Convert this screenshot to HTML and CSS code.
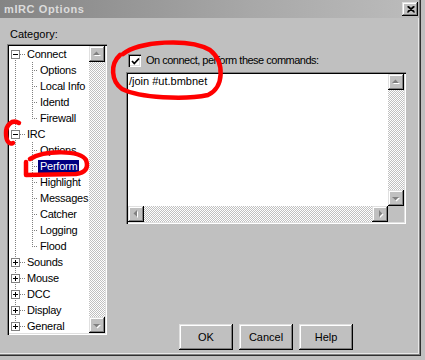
FILE: index.html
```html
<!DOCTYPE html>
<html>
<head>
<meta charset="utf-8">
<link rel="stylesheet" href="styles.css">
</head>
<body>
<div class="window">
  <div class="titlebar">
    <span class="title">mIRC Options</span>
    <span class="close raised"><svg width="8" height="7" viewBox="0 0 8 7"><path d="M0.5 0.5 L7.5 6.5 M1.5 0.5 L7.5 5.7 M7.5 0.5 L0.5 6.5 M6.5 0.5 L0.5 5.7" stroke="#000" stroke-width="1.1" fill="none"/></svg></span>
  </div>
  <div class="content">
    <div class="left">
      <div class="cat-label">Category:</div>
      <div class="tree sunken">
        <ul class="rows">
          <li class="row top first"><span class="c0"><span class="exp minus"></span></span><span class="label">Connect</span></li>
          <li class="row child"><span class="c0"></span><span class="c1"></span><span class="label">Options</span></li>
          <li class="row child"><span class="c0"></span><span class="c1"></span><span class="label">Local Info</span></li>
          <li class="row child"><span class="c0"></span><span class="c1"></span><span class="label">Identd</span></li>
          <li class="row child"><span class="c0"></span><span class="c1 endc"></span><span class="label">Firewall</span></li>
          <li class="row top"><span class="c0"><span class="exp minus"></span></span><span class="label">IRC</span></li>
          <li class="row child"><span class="c0"></span><span class="c1"></span><span class="label">Options</span></li>
          <li class="row child"><span class="c0"></span><span class="c1"></span><span class="label selected">Perform</span></li>
          <li class="row child"><span class="c0"></span><span class="c1"></span><span class="label">Highlight</span></li>
          <li class="row child"><span class="c0"></span><span class="c1"></span><span class="label">Messages</span></li>
          <li class="row child"><span class="c0"></span><span class="c1"></span><span class="label">Catcher</span></li>
          <li class="row child"><span class="c0"></span><span class="c1"></span><span class="label">Logging</span></li>
          <li class="row child"><span class="c0"></span><span class="c1 endc"></span><span class="label">Flood</span></li>
          <li class="row top"><span class="c0"><span class="exp plus"></span></span><span class="label">Sounds</span></li>
          <li class="row top"><span class="c0"><span class="exp plus"></span></span><span class="label">Mouse</span></li>
          <li class="row top"><span class="c0"><span class="exp plus"></span></span><span class="label">DCC</span></li>
          <li class="row top"><span class="c0"><span class="exp plus"></span></span><span class="label">Display</span></li>
          <li class="row top last"><span class="c0"><span class="exp plus"></span></span><span class="label">General</span></li>
        </ul>
        <div class="vscroll">
          <span class="sbtn raised"><svg width="16" height="16" viewBox="0 0 16 16"><polygon points="5,10 12,10 8.5,6.5" fill="#fff"/><polygon points="4,9 11,9 7.5,5.5" fill="#808080"/></svg></span>
          <span class="track"></span>
          <span class="sbtn raised"><svg width="16" height="16" viewBox="0 0 16 16"><polygon points="5,8 12,8 8.5,11.5" fill="#fff"/><polygon points="4,7 11,7 7.5,10.5" fill="#808080"/></svg></span>
        </div>
      </div>
    </div>
    <div class="right">
      <div class="check-row">
        <span class="checkbox"><svg width="9" height="9" viewBox="0 0 9 9"><path d="M1 4 L3.3 6.5 L8 1.5" stroke="#000" stroke-width="1.8" fill="none"/></svg></span>
        <span class="check-text">On connect, perform these commands:</span>
      </div>
      <div class="editor sunken">
        <div class="text">/join #ut.bmbnet</div>
        <div class="vscroll">
          <span class="sbtn raised"><svg width="16" height="16" viewBox="0 0 16 16"><polygon points="5,10 12,10 8.5,6.5" fill="#fff"/><polygon points="4,9 11,9 7.5,5.5" fill="#808080"/></svg></span>
          <span class="track"></span>
          <span class="sbtn raised"><svg width="16" height="16" viewBox="0 0 16 16"><polygon points="5,8 12,8 8.5,11.5" fill="#fff"/><polygon points="4,7 11,7 7.5,10.5" fill="#808080"/></svg></span>
        </div>
        <div class="hscroll">
          <span class="sbtn raised"><svg width="16" height="16" viewBox="0 0 16 16"><polygon points="10,5 10,12 6.5,8.5" fill="#fff"/><polygon points="9,4 9,11 5.5,7.5" fill="#808080"/></svg></span>
          <span class="track"></span>
          <span class="sbtn raised"><svg width="16" height="16" viewBox="0 0 16 16"><polygon points="8,5 8,12 11.5,8.5" fill="#fff"/><polygon points="7,4 7,11 10.5,7.5" fill="#808080"/></svg></span>
        </div>
        <div class="corner"></div>
      </div>
      <div class="buttons">
        <button class="btn raised">OK</button>
        <button class="btn raised">Cancel</button>
        <button class="btn raised">Help</button>
      </div>
    </div>
  </div>
  <svg class="marks" width="425" height="360" viewBox="0 0 425 360">
    <g fill="none" stroke="#f00" stroke-width="4.5" stroke-linecap="round" stroke-linejoin="round">
      <path d="M123,54 C138,41 190,38 210,50 C225,62 224,88 208,95 C185,100 140,98 122,89 C111,81 110,64 120,55"/>
      <path d="M19,123 C12,119 6,125 6,133 C6,141 9,145 13,143"/>
      <path d="M30,159 C45,150 80,150 86,160 C89,168 85,173 76,174 L26,175 L26,162"/>
    </g>
  </svg>
</div>
</body>
</html>
```

FILE: styles.css
```css
* { box-sizing: border-box; }
html, body { margin: 0; padding: 0; }
body {
  width: 425px;
  height: 360px;
  overflow: hidden;
  background: #c0c0c0;
  font-family: "Liberation Sans", Arial, sans-serif;
  font-size: 11px;
  color: #000;
}
.window {
  position: relative;
  width: 421px;
  height: 356px;
  border-right: 1px solid #303030;
  border-bottom: 1px solid #303030;
  box-shadow: inset -1px -1px #808080, inset -2px -2px #e8e8e8;
  display: flex;
  flex-direction: column;
}
.titlebar {
  height: 18px;
  margin-right: 1px;
  background: linear-gradient(to right, #848484 0%, #a8a8a8 60%, #bcbcbc 100%);
  display: flex;
  align-items: center;
  justify-content: space-between;
  padding: 0 1px 0 4px;
}
.title {
  color: #dcdcdc;
  font-weight: bold;
  font-size: 11px;
  letter-spacing: 0.6px;
}
.raised {
  background: #c0c0c0;
  box-shadow: inset -1px -1px #000, inset 1px 1px #e0e0e0, inset -2px -2px #808080, inset 2px 2px #fff;
}
.sunken {
  box-shadow: inset 1px 1px #808080, inset 2px 2px #000, inset -1px -1px #fff, inset -2px -2px #dfdfdf;
  padding: 2px;
}
.close {
  width: 16px;
  height: 14px;
  display: flex;
  align-items: center;
  justify-content: center;
  padding-left: 1px;
}
.content {
  flex: 1;
  display: flex;
  gap: 19px;
  padding: 10px 0 5px 7px;
}
.left {
  width: 100px;
  display: flex;
  flex-direction: column;
}
.cat-label {
  height: 13px;
  line-height: 13px;
  padding-left: 3px;
  margin-bottom: 3px;
}
.tree {
  height: 291px;
  background: #fff;
  display: flex;
  overflow: hidden;
}
.rows {
  list-style: none;
  margin: 0;
  padding: 0;
  flex: 1;
  overflow: hidden;
}
.row {
  height: 16px;
  display: flex;
  align-items: center;
  white-space: nowrap;
}
.c0 {
  width: 16px;
  height: 16px;
  flex: none;
  display: flex;
  align-items: flex-start;
  background-image:
    repeating-linear-gradient(#808080 0 1px, transparent 1px 2px),
    repeating-linear-gradient(to right, #808080 0 1px, transparent 1px 2px);
  background-size: 1px 16px, 5px 1px;
  background-position: 6px 0, 11px 8px;
  background-repeat: no-repeat;
}
.child .c0 { background-size: 1px 16px, 0 0; }
.first .c0 { background-size: 1px 8px, 5px 1px; background-position: 6px 8px, 11px 8px; }
.last .c0 { background-size: 1px 9px, 5px 1px; background-position: 6px 0, 11px 8px; }
.c1 {
  width: 13px;
  height: 16px;
  flex: none;
  background-image:
    repeating-linear-gradient(#808080 0 1px, transparent 1px 2px),
    repeating-linear-gradient(to right, #808080 0 1px, transparent 1px 2px);
  background-size: 1px 16px, 6px 1px;
  background-position: 7px 0, 7px 8px;
  background-repeat: no-repeat;
}
.c1.endc { background-size: 1px 9px, 6px 1px; }
.exp {
  width: 9px;
  height: 9px;
  margin: 4px 0 0 2px;
  border: 1px solid #808080;
  background-color: #fff;
  background-repeat: no-repeat;
}
.exp.minus {
  background-image: linear-gradient(#000, #000);
  background-size: 5px 1px;
  background-position: 1px 3px;
}
.exp.plus {
  background-image: linear-gradient(#000, #000), linear-gradient(#000, #000);
  background-size: 5px 1px, 1px 5px;
  background-position: 1px 3px, 3px 1px;
}
.label {
  padding: 0 2px;
  line-height: 13px;
  height: 13px;
  letter-spacing: -0.25px;
}
.label.selected {
  background: #000080;
  color: #fff;
}
.vscroll {
  width: 16px;
  flex: none;
  display: flex;
  flex-direction: column;
}
.hscroll {
  height: 16px;
  display: flex;
}
.track {
  flex: 1;
  background: repeating-conic-gradient(#c0c0c0 0 25%, #fff 0 50%) 0 0 / 2px 2px;
}
.sbtn {
  width: 16px;
  height: 16px;
  flex: none;
  display: block;
}
.sbtn svg { display: block; }
.right {
  width: 280px;
  display: flex;
  flex-direction: column;
}
.check-row {
  margin-top: 26px;
  height: 13px;
  display: flex;
  align-items: center;
  gap: 5px;
  padding-left: 2px;
}
.checkbox {
  width: 13px;
  height: 13px;
  background: #fff;
  box-shadow: inset 1px 1px #808080, inset 2px 2px #000, inset -1px -1px #fff, inset -2px -2px #dfdfdf;
  display: flex;
  align-items: center;
  justify-content: center;
  padding: 1px 0 0 1px;
}
.checkbox svg { display: block; }
.check-text {
  letter-spacing: -0.5px;
  line-height: 13px;
}
.editor {
  margin-top: 5px;
  height: 152px;
  display: grid;
  grid-template-columns: 1fr 16px;
  grid-template-rows: 1fr 16px;
  background: #fff;
}
.editor .text {
  padding: 1px 1px;
  line-height: 13px;
}
.corner { background: #c0c0c0; }
.buttons {
  margin-top: auto;
  margin-left: 53px;
  display: flex;
  gap: 6px;
}
.btn {
  width: 54px;
  height: 26px;
  border: none;
  font-family: "Liberation Sans", Arial, sans-serif;
  font-size: 11px;
  color: #000;
  padding: 0;
}
.marks {
  position: absolute;
  top: 0;
  left: 0;
  pointer-events: none;
}
```
